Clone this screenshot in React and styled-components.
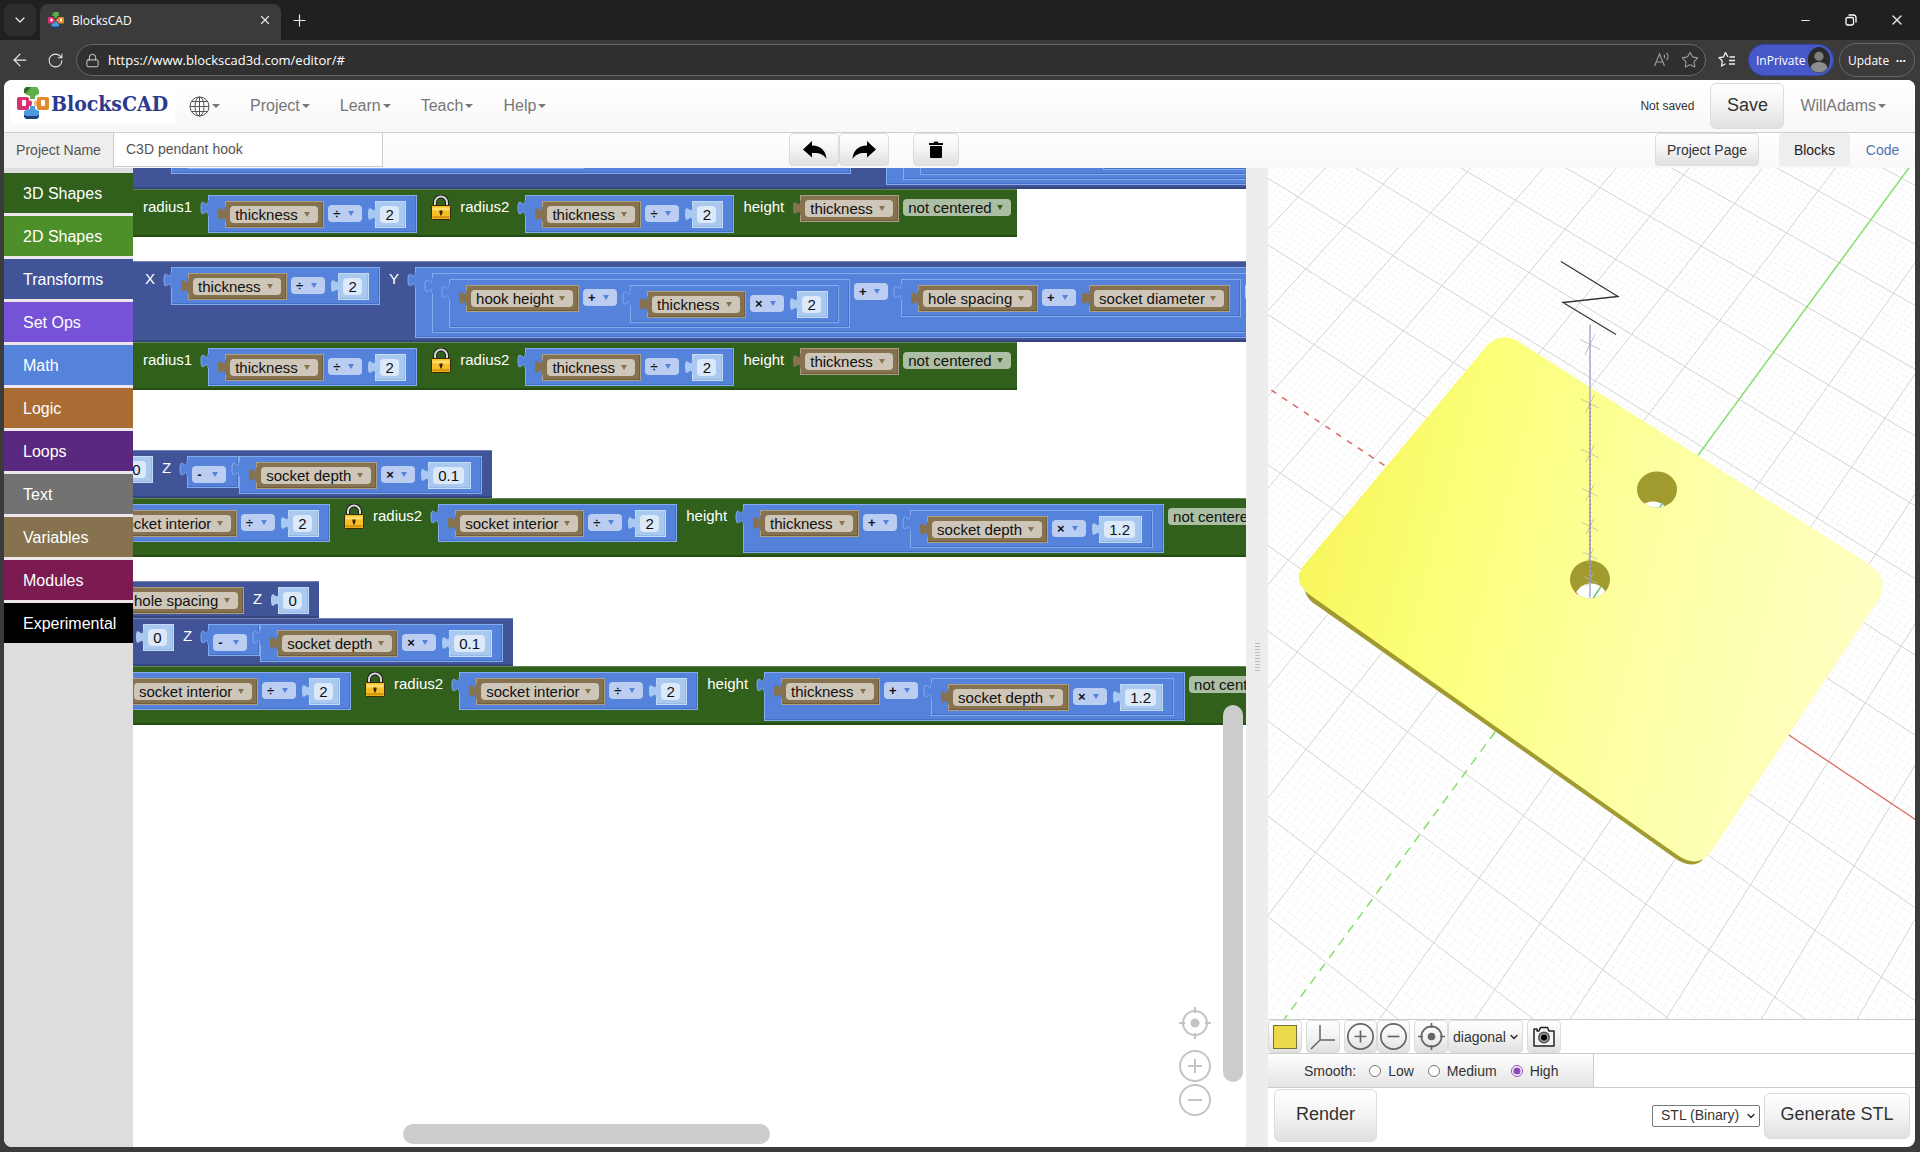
import React from 'react'
import styled, { createGlobalStyle, css } from 'styled-components'
import { ArrowLeft, ChevronDown, Lock, Minus, Plus, RotateCw, Star, X } from 'lucide-react'

const GlobalStyle = createGlobalStyle`
    * {
        box-sizing: border-box;
    }
    body {
        margin: 0;
        background: #3b3b3b;
        font-family: "Liberation Sans", Arial, sans-serif;
        font-size: 14px;
        color: #333;
    }
    button, input, select {
        font-family: inherit;
        margin: 0;
    }
`

const HUES = {
    math: { fill: '#5583dc', light: '#84abed', dark: '#4570c4' },
    variable: { fill: '#86724f', light: '#ad9f86', dark: '#6f5e40' },
    number: { fill: '#a9c9f0', light: '#c3dbf6', dark: '#97b8e2' },
    transform: { fill: '#415498', light: '#7584b6', dark: '#344680' },
    shape: { fill: '#30601c', light: '#5f8650', dark: '#244c14' },
}

const CATEGORIES = [
    ['3D Shapes', '#30601c'],
    ['2D Shapes', '#4d902a'],
    ['Transforms', '#415498'],
    ['Set Ops', '#7652d8'],
    ['Math', '#5583dc'],
    ['Logic', '#a96c33'],
    ['Loops', '#5a297f'],
    ['Text', '#727272'],
    ['Variables', '#86724f'],
    ['Modules', '#7c1b52'],
    ['Experimental', '#000'],
]

/* ---------- icons ---------- */

const LogoMark = ({ size }) => (
    <svg width={size} height={size} viewBox="0 0 32 32" aria-hidden="true">
        <path d="M9 0h11l2 3v4l-4 2v3h-5V9L8 7z" fill="#5fae4b" />
        <path d="M9 0h5L9 6 7 6V2z" fill="#2f6b2a" />
        <rect x="0" y="10" width="12" height="13" rx="2" fill="#d4336f" />
        <path d="M12 14c2-1 3 0 3 2s-1 4-3 3z" fill="#d4336f" />
        <rect x="5" y="13" width="4" height="6" rx="1" fill="#fff" />
        <rect x="20" y="10" width="12" height="13" rx="2" fill="#e08a2e" />
        <path d="M20 14c-2-1-3 0-3 2s1 4 3 3z" fill="#f2b46b" />
        <rect x="24" y="13" width="4" height="6" rx="1" fill="#fff" />
        <path d="M13 19h5v3l4 2v5l-2 2H9l-2-2v-5l6-2z" fill="#4c9be0" />
        <path d="M7 28l3 1h9l3-1v2l-2 2H9l-2-2z" fill="#1f3f86" />
    </svg>
)

const GlobeIcon = () => (
    <svg width="21" height="21" viewBox="0 0 21 21" fill="none" stroke="#555" aria-hidden="true">
        <circle cx="10.5" cy="10.5" r="9.5" />
        <ellipse cx="10.5" cy="10.5" rx="4.5" ry="9.5" />
        <path d="M10.5 1v19M1 10.5h19M2.5 5.5h16M2.5 15.5h16" />
    </svg>
)

const RestoreIcon = () => (
    <svg width="12" height="12" viewBox="0 0 12 12" fill="none" stroke="#fff" strokeWidth="1.3" aria-hidden="true">
        <rect x="1" y="3.5" width="7.5" height="7.5" rx="1.5" />
        <path d="M3.5 1h5a2.5 2.5 0 0 1 2.5 2.5v5" />
    </svg>
)

const ReadAloudIcon = () => (
    <svg width="18" height="18" viewBox="0 0 18 18" fill="none" stroke="#9b9b9b" strokeWidth="1.2" aria-hidden="true">
        <path d="M1.5 15 6.5 3l5 12M3.2 11h6.6M11 4c1 1 1 2 0 3M13.5 2c2 2 2 5 0 7" />
    </svg>
)

const FavoritesIcon = () => (
    <svg width="18" height="18" viewBox="0 0 18 18" fill="none" stroke="#eee" strokeWidth="1.3" strokeLinejoin="round" aria-hidden="true">
        <path d="M10 6 7.5 1.5 5.5 6 1 6.6 4.3 10 3.5 15l4-2.2M11.5 6H17M11 9.5h6M11 13h6" />
    </svg>
)

const ArrowIcon = ({ flip }) => (
    <svg width="25" height="20" viewBox="0 0 25 20" aria-hidden="true">
        <path
            transform={flip ? 'translate(25 0) scale(-1 1)' : undefined}
            d="M15 1l9 8.5-9 8V13C8 12.5 3.500 14 .5 19 1 11 6 5.800 15 5.5z"
        />
    </svg>
)

const TrashIcon = () => (
    <svg width="16" height="17" viewBox="0 0 16 17" aria-hidden="true">
        <path d="M1 2h4.500l1-1.500h3l1 1.500H15v2H1zM2 5h12v11a1 1 0 0 1-1 1H3a1 1 0 0 1-1-1z" />
    </svg>
)

const PadlockIcon = () => (
    <svg width="20" height="25" viewBox="0 0 20 25" aria-hidden="true">
        <path d="M4 12V7.500a6 6 0 0 1 12 0V12" fill="none" stroke="#1c1c1c" strokeWidth="4" />
        <path d="M4 12V7.500a6 6 0 0 1 12 0V12" fill="none" stroke="#d9d9d9" strokeWidth="2" />
        <rect x=".5" y="10.5" width="19" height="14" rx="1" fill="#f5bf25" stroke="#3a2c06" />
        <path d="M1.5 12.500h17v3h-17z" fill="#ffdf6b" />
        <path d="M1.5 21h17v2.500h-17z" fill="#d99712" />
        <path d="M8.5 15.500h3v2l-1 3h-1l-1-3z" fill="#3a2000" />
    </svg>
)

const ZoomIcon = ({ kind, size = 32, color = '#c4c4c4', weight = 2 }) => (
    <svg width={size} height={size} viewBox="0 0 32 32" fill="none" stroke={color} strokeWidth={weight} aria-hidden="true">
        {kind === 'center' ? (
            <>
                <circle cx="16" cy="16" r="12" />
                <circle cx="16" cy="16" r="4.5" fill={color} stroke="none" />
                <path d="M16 0v6M16 26v6M0 16h6M26 16h6" />
            </>
        ) : (
            <>
                <circle cx="16" cy="16" r="15" />
                <path d={kind === 'in' ? 'M9 16h14M16 9v14' : 'M9 16h14'} />
            </>
        )}
    </svg>
)

const AxesIcon = () => (
    <svg width="26" height="26" viewBox="0 0 26 26" fill="none" stroke="#666" strokeWidth="1.5" aria-hidden="true">
        <path d="M10 1v15h15M10 16l-9 9" />
    </svg>
)

const CameraIcon = () => (
    <svg width="22" height="23" viewBox="0 0 22 23" aria-hidden="true">
        <path
            d="M1 6V4h3v2h2l1.500-3.500h7L16 6h5v15H1z"
            fill="#f4f4f4"
            stroke="#222"
            strokeWidth="1.5"
            strokeLinejoin="round"
        />
        <circle cx="11" cy="12.5" r="6" fill="#555" />
        <circle cx="11" cy="12.5" r="4.5" fill="#999" />
        <circle cx="11" cy="12.5" r="3" fill="#000" />
    </svg>
)

/* ---------- blocks ---------- */

const Tab = ({ hue, outline }) => (
    <TabShape width="9" height="17" viewBox="0 0 9 17" aria-hidden="true">
        <path
            d="M9 1H8c0 10-7-7-7 7s7-3 7 7h1z"
            fill={HUES[hue].fill}
            stroke={outline ? HUES[hue].light : 'none'}
        />
        <path d="M8.5 .5v15" stroke={HUES[hue].fill} />
    </TabShape>
)

const MathBlock = ({ children, unary, width }) => (
    <Block $hue="math" $pad={unary ? '6px 0 5px 1px' : '6px 11px 5px 17px'} $width={width}>
        <Tab hue="math" outline />
        {children}
    </Block>
)

const Variable = ({ name }) => (
    <Block $hue="variable" $pad="5px 6px 5px 5px">
        <Tab hue="variable" />
        <FieldWrap $arrow={HUES.variable.fill}>
            <FieldSelect aria-label="Variable" defaultValue={name}>
                <option>{name}</option>
            </FieldSelect>
        </FieldWrap>
    </Block>
)

const NumberBlock = ({ value }) => (
    <Block $hue="number" $pad="5px 7px 5px 5px">
        <Tab hue="number" />
        <NumberInput aria-label="Number" defaultValue={value} $chars={String(value).length} />
    </Block>
)

const Operator = ({ sign }) => (
    <OperatorWrap $arrow={HUES.math.fill}>
        <OperatorSelect aria-label="Operation" defaultValue={sign}>
            <option>{sign}</option>
        </OperatorSelect>
    </OperatorWrap>
)

const Centering = () => (
    <CenteringWrap $arrow={HUES.shape.fill}>
        <FieldSelect aria-label="Centering" defaultValue="not centered">
            <option>not centered</option>
        </FieldSelect>
    </CenteringWrap>
)

const HalfOf = ({ name }) => (
    <MathBlock>
        <Variable name={name} />
        <Operator sign="÷" />
        <NumberBlock value="2" />
    </MathBlock>
)

const Times = ({ name, value }) => (
    <MathBlock>
        <Variable name={name} />
        <Operator sign="×" />
        <NumberBlock value={value} />
    </MathBlock>
)

const ThicknessCylinder = () => (
    <Row $hue="shape" $lead={90} $end={6}>
        <Label>radius1</Label>
        <HalfOf name="thickness" />
        <LockSlot><PadlockIcon /></LockSlot>
        <Label>radius2</Label>
        <HalfOf name="thickness" />
        <Label>height</Label>
        <Variable name="thickness" />
        <Centering />
    </Row>
)

const SocketCylinder = ({ lead }) => (
    <Row $hue="shape" $lead={lead} $end={6}>
        <HalfOf name="socket interior" />
        <LockSlot><PadlockIcon /></LockSlot>
        <Label>radius2</Label>
        <HalfOf name="socket interior" />
        <Label>height</Label>
        <MathBlock>
            <Variable name="thickness" />
            <Operator sign="+" />
            <Times name="socket depth" value="1.2" />
        </MathBlock>
        <Centering />
    </Row>
)

const SocketTranslate = ({ lead }) => (
    <Row $hue="transform" $lead={lead} $end={10}>
        <NumberBlock value="0" />
        <Label>Z</Label>
        <MathBlock unary>
            <Operator sign="-" />
        </MathBlock>
        <Times name="socket depth" value="0.1" />
    </Row>
)

const HookTranslate = () => (
    <Row $hue="transform" $lead={22} $end={10}>
        <Label>{'translate   X'}</Label>
        <HalfOf name="thickness" />
        <Label>Y</Label>
        <MathBlock>
            <MathBlock>
                <MathBlock>
                    <Variable name="hook height" />
                    <Operator sign="+" />
                    <Times name="thickness" value="2" />
                </MathBlock>
                <Operator sign="+" />
                <MathBlock>
                    <Variable name="hole spacing" />
                    <Operator sign="+" />
                    <Variable name="socket diameter" />
                </MathBlock>
                <Operator sign="÷" />
                <NumberBlock value="2" />
            </MathBlock>
            <Operator sign="+" />
            <Variable name="thickness" />
        </MathBlock>
    </Row>
)

const UpperTranslate = () => (
    <Row $hue="transform" $lead={22} $end={10}>
        <Label>{'translate   X'}</Label>
        <MathBlock width={680}>
            <MathBlock width={396}>
                <HalfOf name="thickness" />
            </MathBlock>
        </MathBlock>
        <Label>Y</Label>
        <MathBlock>
            <MathBlock>
                <MathBlock width={480}>
                    <HookSpacer />
                    <Times name="thickness" value="2" />
                </MathBlock>
            </MathBlock>
        </MathBlock>
    </Row>
)

/* ---------- 3D view ---------- */

// ground plane to screen, origin and axis vectors in view pixels
const project = (i, j) => {
    const w = 1 - 0.0121 * i + 0.01635 * j
    return [322 + (56.7 * i + 39.7 * j) / w, 435 + (37.8 * i - 54.1 * j) / w]
}

const segment = (a, b) => `M${a[0].toFixed(1)} ${a[1].toFixed(1)}L${b[0].toFixed(1)} ${b[1].toFixed(1)}`

const gridPath = (step, keep) => {
    let d = ''
    for (let n = -180; n <= 180; n += step) {
        if (!keep(n)) continue
        const k = n / 10
        d += segment(project(k, -18), project(k, 18))
        d += segment(project(-18, k), project(18, k))
    }
    return d
}

const MINOR = gridPath(1, (n) => n % 10 !== 0)
const MAJOR = gridPath(10, (n) => n !== 0)

const TICKS = [[177, 10], [236, 9], [286, 9], [325, 8], [359, 8], [388, 7], [412, 7]]

const ModelView = () => (
    <Scene viewBox="0 0 647 852" preserveAspectRatio="xMidYMid slice" role="img" aria-label="Rendered model">
        <defs>
            <linearGradient id="plate" gradientUnits="userSpaceOnUse" x1="30" y1="350" x2="620" y2="500">
                <stop offset="0" stopColor="#f8f55a" />
                <stop offset="0.25" stopColor="#fbff78" />
                <stop offset="0.6" stopColor="#fcffa4" />
                <stop offset="1" stopColor="#feffc6" />
            </linearGradient>
            <clipPath id="holeA"><ellipse cx="322" cy="412" rx="20" ry="19" /></clipPath>
            <clipPath id="holeB"><ellipse cx="389" cy="322" rx="20" ry="18" /></clipPath>
        </defs>
        <rect width="647" height="852" fill="#fff" />
        <path d={MINOR} stroke="#f2f2f2" fill="none" strokeDasharray="3 2" />
        <path d={MAJOR} stroke="#d3d3d3" fill="none" />
        <path d={segment(project(0, 0), project(0, 18))} stroke="#86dd6c" strokeWidth="1.5" />
        <path d={segment(project(0, 0), project(0, -18))} stroke="#86dd6c" strokeWidth="1.5" strokeDasharray="9 7" />
        <path d={segment(project(0, 0), project(18, 0))} stroke="#d9695f" strokeWidth="1.3" />
        <path d={segment(project(0, 0), project(-18, 0))} stroke="#d9695f" strokeWidth="1.5" strokeDasharray="6 7" />
        <path d="M37 424Q40 433 49 438L406 690Q424 703 435 692L420 670 52 420z" fill="#a19a2e" />
        <path
            d="M219 178Q233 164 250 174L597 394Q622 410 612 430L444 683Q431 702 410 688L44 429Q24 416 34 400z"
            fill="url(#plate)"
        />
        <g clipPath="url(#holeB)">
            <rect x="365" y="300" width="50" height="45" fill="#a19a2e" />
            <circle cx="385" cy="351" r="17" fill="#fff" />
            <path d="M391 341l4-6" stroke="#6cc79a" strokeWidth="1.5" />
        </g>
        <g clipPath="url(#holeA)">
            <rect x="300" y="390" width="45" height="45" fill="#a19a2e" />
            <circle cx="323" cy="433" r="17" fill="#fff" />
            <path d="M325 431l8-12" stroke="#6cc76a" strokeWidth="1.5" />
            <path d="M306 424l4 3" stroke="#d9695f" strokeWidth="1.5" />
        </g>
        {TICKS.map(([y, r]) => (
            <path
                key={y}
                d={`M${322 - r} ${y - r / 2}L${322 + r} ${y + r / 2}M${322 - r / 2} ${y + r}L${322 + r / 2} ${y - r}`}
                stroke="#b9b9a8"
                strokeWidth="0.8"
            />
        ))}
        <path d="M322 157v273" stroke="#a9a4d8" strokeWidth="1.5" />
        <path d="M322 236v180" stroke="#77767c" strokeDasharray="2 2" />
        <path d="M293 94l57 35-55 6 53 32" fill="none" stroke="#333" strokeWidth="1.3" />
    </Scene>
)

const App = () => {
    return (
        <Shell>
            <GlobalStyle />
            <TitleBar>
                <TabListButton aria-label="Tab list"><ChevronDown size={16} /></TabListButton>
                <BrowserTab>
                    <LogoMark size={16} />
                    <TabTitle>BlocksCAD</TabTitle>
                    <ChromeButton aria-label="Close tab"><X size={14} /></ChromeButton>
                </BrowserTab>
                <ChromeButton aria-label="New tab"><Plus size={19} strokeWidth={1.5} /></ChromeButton>
                <WindowControls>
                    <ChromeButton aria-label="Minimize"><Minus size={13} /></ChromeButton>
                    <ChromeButton aria-label="Restore"><RestoreIcon /></ChromeButton>
                    <ChromeButton aria-label="Close"><X size={16} /></ChromeButton>
                </WindowControls>
            </TitleBar>
            <AddressBar>
                <ChromeButton aria-label="Back"><ArrowLeft size={20} strokeWidth={1.5} /></ChromeButton>
                <ChromeButton aria-label="Refresh"><RotateCw size={17} strokeWidth={1.5} /></ChromeButton>
                <UrlBox>
                    <Lock size={15} strokeWidth={1.5} />
                    <UrlInput aria-label="Address" defaultValue="https://www.blockscad3d.com/editor/#" />
                    <ChromeButton aria-label="Read aloud"><ReadAloudIcon /></ChromeButton>
                    <ChromeButton aria-label="Add favorite"><Star size={18} strokeWidth={1.5} color="#9b9b9b" /></ChromeButton>
                </UrlBox>
                <ChromeButton aria-label="Favorites"><FavoritesIcon /></ChromeButton>
                <PrivatePill>
                    InPrivate
                    <svg width="24" height="26" viewBox="0 0 24 28" aria-hidden="true">
                        <ellipse cx="12" cy="14" rx="12" ry="14" fill="#2b2b2b" />
                        <circle cx="12" cy="10" r="5" fill="#7d7d7d" />
                        <path d="M3 23c0-9 18-9 18 0-4 6-14 6-18 0z" fill="#8d8d8d" />
                    </svg>
                </PrivatePill>
                <UpdatePill>Update <b>···</b></UpdatePill>
            </AddressBar>
            <Page>
                <NavBar>
                    <Brand href="#"><LogoMark size={32} />BlocksCAD</Brand>
                    <NavButton aria-label="Language" $gap={25}><GlobeIcon /><Caret /></NavButton>
                    <NavButton $gap={25}>Project<Caret /></NavButton>
                    <NavButton $gap={25}>Learn<Caret /></NavButton>
                    <NavButton $gap={25}>Teach<Caret /></NavButton>
                    <NavButton>Help<Caret /></NavButton>
                    <Spacer />
                    <SaveState>Not saved</SaveState>
                    <BigButton $height={46} $width={74}>Save</BigButton>
                    <UserButton>WillAdams<Caret /></UserButton>
                </NavBar>
                <ProjectBar>
                    <NameLabel htmlFor="project-name">Project Name</NameLabel>
                    <NameInput id="project-name" defaultValue="C3D pendant hook" />
                    <EditTools>
                        <ToolButton $width={50} aria-label="Undo"><ArrowIcon flip /></ToolButton>
                        <ToolButton $width={50} aria-label="Redo"><ArrowIcon /></ToolButton>
                        <TrashButton $width={46} aria-label="Delete"><TrashIcon /></TrashButton>
                    </EditTools>
                    <Spacer />
                    <ToolButton $width={104}>Project Page</ToolButton>
                    <ViewSwitch>
                        <SwitchButton $active>Blocks</SwitchButton>
                        <SwitchButton>Code</SwitchButton>
                    </ViewSwitch>
                </ProjectBar>
                <Main>
                    <Toolbox>
                        {CATEGORIES.map(([name, color]) => (
                            <Category key={name} $color={color}>{name}</Category>
                        ))}
                    </Toolbox>
                    <Workspace>
                        <Stack $y={-60}>
                            <UpperTranslate />
                            <ThicknessCylinder />
                        </Stack>
                        <Stack $y={93}>
                            <HookTranslate />
                            <ThicknessCylinder />
                        </Stack>
                        <Stack $y={282}>
                            <SocketTranslate lead={69} />
                            <SocketCylinder lead={38} />
                        </Stack>
                        <Stack $y={413}>
                            <Row $hue="transform" $lead={71} $end={10}>
                                <Variable name="hole spacing" />
                                <Label>Z</Label>
                                <NumberBlock value="0" />
                            </Row>
                            <SocketTranslate lead={90} />
                            <SocketCylinder lead={59} />
                        </Stack>
                        <VerticalThumb />
                        <HorizontalThumb />
                        <ZoomControls>
                            <PlainButton aria-label="Center"><ZoomIcon kind="center" /></PlainButton>
                            <PlainButton aria-label="Zoom in"><ZoomIcon kind="in" /></PlainButton>
                            <PlainButton aria-label="Zoom out"><ZoomIcon kind="out" /></PlainButton>
                        </ZoomControls>
                    </Workspace>
                    <Splitter><Grip /></Splitter>
                    <RenderPane>
                        <SceneBox><ModelView /></SceneBox>
                        <ViewTools>
                            <ToolButton $width={34} aria-label="Color"><Swatch /></ToolButton>
                            <ToolButton $width={34} aria-label="Axes"><AxesIcon /></ToolButton>
                            <Group>
                                <ToolButton $width={33} aria-label="Zoom in"><ZoomIcon kind="in" size={27} color="#666" /></ToolButton>
                                <ToolButton $width={33} aria-label="Zoom out"><ZoomIcon kind="out" size={27} color="#666" /></ToolButton>
                            </Group>
                            <Group>
                                <ToolButton $width={34} aria-label="Reset view"><ZoomIcon kind="center" size={27} color="#666" /></ToolButton>
                                <SelectWrap>
                                    <AngleSelect aria-label="View angle" defaultValue="diagonal">
                                        <option>diagonal</option>
                                    </AngleSelect>
                                    <ChevronDown size={12} strokeWidth={3} />
                                </SelectWrap>
                            </Group>
                            <ToolButton $width={34} aria-label="Take picture"><CameraIcon /></ToolButton>
                        </ViewTools>
                        <SmoothRow>
                            <SmoothBox>
                                <legend>Smooth:</legend>
                                <label><Radio type="radio" name="smooth" />Low</label>
                                <label><Radio type="radio" name="smooth" />Medium</label>
                                <label><Radio type="radio" name="smooth" defaultChecked />High</label>
                            </SmoothBox>
                        </SmoothRow>
                        <RenderRow>
                            <BigButton $height={53} $width={103}>Render</BigButton>
                            <Spacer />
                            <SelectWrap>
                                <FormatSelect aria-label="File format" defaultValue="STL (Binary)">
                                    <option>STL (Binary)</option>
                                </FormatSelect>
                                <ChevronDown size={12} strokeWidth={3} />
                            </SelectWrap>
                            <BigButton $height={46} $width={146}>Generate STL</BigButton>
                        </RenderRow>
                    </RenderPane>
                </Main>
            </Page>
        </Shell>
    )
}

/* ---------- browser frame ---------- */

const Shell = styled.div`
    display: flex;
    flex-direction: column;
    height: 100vh;
    overflow: hidden;
`

const TitleBar = styled.div`
    display: flex;
    flex: 0 0 40px;
    align-items: center;
    gap: 4px;
    padding-left: 4px;
    background: #202020;
    color: #e6e6e6;
`

const PlainButton = styled.button`
    display: flex;
    align-items: center;
    justify-content: center;
    padding: 0;
    border: none;
    background: none;
    cursor: pointer;
`

const ChromeButton = styled(PlainButton)`
    min-width: 28px;
    height: 28px;
    color: #e6e6e6;
`

const TabListButton = styled(ChromeButton)`
    width: 32px;
    height: 32px;
    border-radius: 8px;
    background: #2d2d2d;
`

const BrowserTab = styled.div`
    display: flex;
    align-items: center;
    align-self: flex-end;
    gap: 8px;
    width: 241px;
    height: 36px;
    padding: 0 2px 4px 8px;
    border-radius: 8px 8px 0 0;
    background: #3b3b3b;
    font-family: "Open Sans", "Noto Sans", sans-serif;
    font-size: 12px;
    color: #fff;
`

const TabTitle = styled.span`
    flex: 1;
`

const WindowControls = styled.div`
    display: flex;
    gap: 18px;
    margin-left: auto;
    padding-right: 9px;
`

const AddressBar = styled.div`
    display: flex;
    flex: 0 0 40px;
    align-items: center;
    gap: 7px;
    padding: 0 5px 0 6px;
    background: #3b3b3b;
    color: #fff;
    font-family: "Open Sans", "Noto Sans", sans-serif;
`

const UrlBox = styled.div`
    display: flex;
    flex: 1;
    align-items: center;
    height: 32px;
    padding: 0 1px 0 8px;
    border: 1px solid #666;
    border-radius: 16px;
    background: #303030;
    color: #d8d8d8;
`

const UrlInput = styled.input`
    flex: 1;
    padding: 0 0 0 8px;
    border: none;
    background: none;
    color: #fff;
    font-size: 13px;
`

const PrivatePill = styled.button`
    display: flex;
    align-items: center;
    justify-content: space-between;
    width: 86px;
    height: 32px;
    padding: 0 2px 0 7px;
    border: 1px solid #3747b0;
    border-radius: 16px;
    background: #4759c8;
    color: #fff;
    font-size: 12px;

    svg {
        flex: none;
    }
`

const UpdatePill = styled.button`
    display: flex;
    align-items: center;
    justify-content: space-between;
    width: 76px;
    height: 34px;
    margin-left: -2px;
    padding: 0 8px;
    border: 1px solid #666;
    border-radius: 17px;
    background: none;
    color: #fff;
    font-size: 12px;
`

/* ---------- page header ---------- */

const Page = styled.div`
    display: flex;
    flex: 1;
    flex-direction: column;
    min-height: 0;
    margin: 0 5px 5px 4px;
    border-radius: 8px;
    background: #fff;
    overflow: hidden;
`

const Spacer = styled.div`
    flex: 1;
`

const NavBar = styled.div`
    display: flex;
    flex: 0 0 53px;
    align-items: center;
    padding-left: 6px;
    border-bottom: 1px solid #d0d0d0;
    background: linear-gradient(#fff, #f8f8f8);
`

const Brand = styled.a`
    display: flex;
    align-items: center;
    gap: 2px;
    width: 165px;
    height: 39px;
    margin: 0 14px 6px 0;
    padding-left: 7px;
    background: #fff;
    color: #2c3a8e;
    font-family: "DejaVu Serif Condensed", "DejaVu Serif", serif;
    font-weight: 700;
    font-size: 21px;
    text-decoration: none;
`

const Caret = styled.span`
    margin-left: 2px;
    border: 4px solid transparent;
    border-top-color: currentColor;
    border-bottom: none;
`

const NavButton = styled(PlainButton)`
    margin-right: ${({ $gap }) => $gap || 0}px;
    color: #777;
    font-size: 16px;

    &:not([aria-label]) {
        margin-left: 5px;
    }
`

const UserButton = styled(NavButton)`
    margin-right: 29px;

    &:not([aria-label]) {
        margin-left: 16px;
    }
`

const SaveState = styled.span`
    margin: 0 16px 0 0;
    font-size: 12px;
`

const raised = css`
    border: 1px solid #dcdcdc;
    background: linear-gradient(#fff, #f3f3f3 50%, #e0e0e0);
    color: #333;
    cursor: pointer;
`

const BigButton = styled.button`
    width: ${({ $width }) => $width}px;
    height: ${({ $height }) => $height}px;
    padding: 0 0 2px;
    border-radius: 6px;
    font-size: 18px;
    ${raised}
`

const ProjectBar = styled.div`
    display: flex;
    flex: 0 0 35px;
    background: linear-gradient(#fff, #f8f8f8);
`

const NameLabel = styled.label`
    display: flex;
    align-items: center;
    justify-content: center;
    width: 110px;
    padding-bottom: 2px;
    border-right: 1px solid #ccc;
    background: #eee;
    color: #555;
`

const NameInput = styled.input`
    width: 269px;
    margin-bottom: 1px;
    padding: 0 0 1px 12px;
    border: 1px solid #ccc;
    border-width: 0 1px 1px 0;
    color: #555;
    font-size: 14px;
`

const ToolButton = styled.button`
    display: flex;
    align-items: center;
    justify-content: center;
    width: ${({ $width }) => $width}px;
    height: 33px;
    padding: 0;
    border-radius: 4px;
    font-size: 14px;
    ${raised}
`

const TrashButton = styled(ToolButton)`
    margin-left: 24px;
`

const EditTools = styled.div`
    display: flex;
    margin-left: 406px;
`

const ViewSwitch = styled.div`
    display: flex;
    margin: 0 0 2px 20px;
`

const SwitchButton = styled(PlainButton)`
    width: ${({ $active }) => ($active ? 71 : 65)}px;
    border-radius: 4px;
    background: ${({ $active }) => ($active ? '#eee' : 'none')};
    color: ${({ $active }) => ($active ? '#222' : '#5373b0')};
    font-size: 14px;
`

/* ---------- workspace ---------- */

const Main = styled.div`
    display: flex;
    flex: 1;
    min-height: 0;
`

const Toolbox = styled.nav`
    display: flex;
    flex: 0 0 129px;
    flex-direction: column;
    padding-top: 5px;
    background: #ddd;
`

const Category = styled.button`
    height: 43px;
    padding: 2px 0 0 19px;
    border: none;
    border-bottom: 3px solid #ede6ec;
    background: ${({ $color }) => $color};
    color: #fff;
    font-size: 16px;
    text-align: left;

    &:last-child {
        height: 40px;
        border: none;
    }
`

const Workspace = styled.div`
    position: relative;
    flex: 1113 1 0;
    min-width: 0;
    background: #fff;
    overflow: hidden;
`

const Stack = styled.div`
    position: absolute;
    left: -80px;
    top: ${({ $y }) => $y}px;
    display: flex;
    flex-direction: column;
    align-items: flex-start;
    font-size: 15px;
`

const Row = styled.div`
    display: flex;
    align-items: flex-start;
    padding: 6px ${({ $end }) => $end}px 4px ${({ $lead }) => $lead}px;
    background: ${({ $hue }) => HUES[$hue].fill};
    box-shadow: inset 0 1px ${({ $hue }) => HUES[$hue].light}, inset 0 -2px ${({ $hue }) => HUES[$hue].dark};
    white-space: pre;
`

const Block = styled.div`
    position: relative;
    display: flex;
    align-items: flex-start;
    width: ${({ $width }) => ($width ? `${$width}px` : 'auto')};
    padding: ${({ $pad }) => $pad};
    background: ${({ $hue }) => HUES[$hue].fill};
    box-shadow: inset 0 0 0 1px ${({ $hue }) => HUES[$hue].light}, inset -2px -2px ${({ $hue }) => HUES[$hue].dark};
`

const TabShape = styled.svg`
    position: absolute;
    left: -8px;
    top: 5px;
`

const Label = styled.span`
    margin: 3px 16px 0 9px;
    color: #fff;
    line-height: 17px;

    ${Row} > &:first-child {
        margin-left: 0;
    }
`

const LockSlot = styled.span`
    display: flex;
    margin: 0 0 0 14px;
`

const HookSpacer = styled.span`
    width: 166px;
`

const FieldWrap = styled.span`
    position: relative;
    display: flex;

    &::after {
        content: '';
        position: absolute;
        right: 8px;
        top: 6px;
        border: 3px solid transparent;
        border-top: 5px solid ${({ $arrow }) => $arrow};
        border-bottom: none;
        pointer-events: none;
    }
`

const FieldSelect = styled.select`
    appearance: none;
    min-width: 88px;
    height: 17px;
    padding: 0 19px 0 5px;
    border: none;
    border-radius: 4px;
    background: rgba(255, 255, 255, 0.6);
    color: #111;
    font-size: 15px;
    line-height: 17px;
`

const CenteringWrap = styled(FieldWrap)`
    margin: 4px 0 0 4px;
`

const OperatorWrap = styled(FieldWrap)`
    margin: 4px 13px 0 4px;
`

const OperatorSelect = styled(FieldSelect)`
    min-width: 0;
    width: 34px;
    padding-right: 0;
    font-size: 13px;
    font-weight: 700;
`

const NumberInput = styled.input`
    width: ${({ $chars }) => ($chars > 1 ? 31 : 19)}px;
    height: 17px;
    padding: 0;
    border: none;
    border-radius: 4px;
    background: #dbe9fa;
    color: #111;
    font-size: 15px;
    text-align: center;
`

const VerticalThumb = styled.div`
    position: absolute;
    right: 3px;
    top: 537px;
    bottom: 65px;
    width: 20px;
    border-radius: 10px;
    background: #ccc;
`

const HorizontalThumb = styled.div`
    position: absolute;
    left: 270px;
    width: 33%;
    bottom: 3px;
    height: 20px;
    border-radius: 10px;
    background: #ccc;
`

const ZoomControls = styled.div`
    position: absolute;
    right: 35px;
    bottom: 31px;
    display: flex;
    flex-direction: column;
    gap: 2px;

    ${PlainButton}:first-child {
        margin-bottom: 9px;
    }
`

const Splitter = styled.div`
    display: flex;
    align-items: center;
    justify-content: center;
    flex: 0 0 22px;
    background: #ededed;
`

const Grip = styled.div`
    width: 5px;
    height: 30px;
    background: repeating-linear-gradient(#bbb 0 1px, transparent 1px 3px);
`

/* ---------- render pane ---------- */

const RenderPane = styled.div`
    display: flex;
    flex: 647 1 0;
    flex-direction: column;
    min-width: 0;
`

const SceneBox = styled.div`
    flex: 1;
    min-height: 0;
`

const Scene = styled.svg`
    display: block;
    width: 100%;
    height: 100%;
`

const ViewTools = styled.div`
    display: flex;
    flex: 0 0 34px;
    gap: 4px;
    border-top: 1px solid #ccc;
`

const Group = styled.div`
    display: flex;
`

const Swatch = styled.span`
    width: 24px;
    height: 24px;
    border: 1px solid #77703a;
    background: #ecd94a;
`

const SelectWrap = styled.span`
    position: relative;
    display: flex;
    align-items: center;

    svg {
        position: absolute;
        right: 3px;
        pointer-events: none;
    }
`

const AngleSelect = styled.select`
    appearance: none;
    width: 75px;
    height: 33px;
    padding: 0 0 0 4px;
    border-radius: 4px;
    font-size: 14px;
    ${raised}
`

const FormatSelect = styled.select`
    appearance: none;
    width: 108px;
    height: 22px;
    padding: 0 0 1px 8px;
    border: 1px solid #767676;
    border-radius: 2px;
    background: #fff;
    color: #333;
    font-size: 14px;
`

const SmoothRow = styled.div`
    display: flex;
    flex: 0 0 35px;
    border: 1px solid #ccc;
    border-width: 1px 0;
`

const SmoothBox = styled.fieldset`
    display: flex;
    align-items: center;
    gap: 14px;
    width: 326px;
    margin: 0;
    padding: 0 0 0 36px;
    border: none;
    border-right: 1px solid #ccc;
    background: linear-gradient(#fff, #e4e4e4);

    legend {
        float: left;
        padding: 0;
    }

    label {
        display: flex;
        align-items: center;
    }
`

const Radio = styled.input`
    width: 12px;
    height: 12px;
    margin: 0 7px 0 0;
    accent-color: #8a4db8;

    ${SmoothBox} label:nth-of-type(1) & {
        margin-left: -1px;
    }
`

const RenderRow = styled.div`
    display: flex;
    flex: 0 0 59px;
    align-items: center;
    gap: 4px;
    padding: 0 5px 4px 6px;
`

export default App
